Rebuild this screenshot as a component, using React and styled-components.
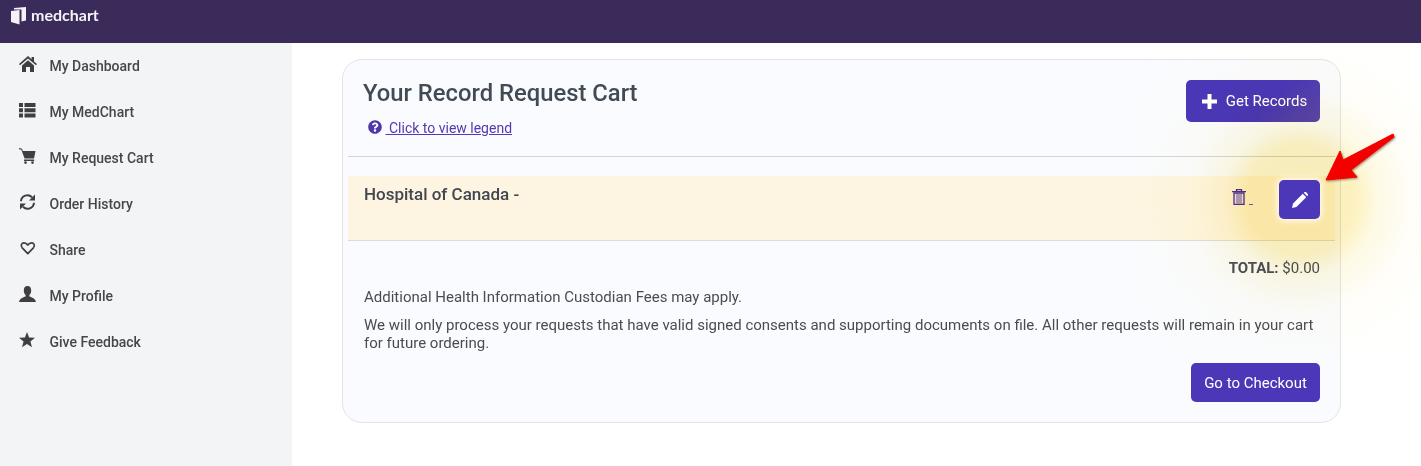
import React from 'react';
import styled, { createGlobalStyle } from 'styled-components';
import { FaQuestionCircle } from 'react-icons/fa';

const Global = createGlobalStyle`
  html, body { margin: 0; padding: 0; background: #fff; }
  body { font-family: Roboto, "Liberation Sans", sans-serif; color: #4a4a4f; }
  * { box-sizing: border-box; }
`;
const Page = styled.div`position: relative; width: 1421px; height: 466px; overflow: hidden;`;
const Header = styled.header`height: 43px; background: #3b2b5b; display: flex; align-items: flex-start; padding: 7px 0 0 11px; gap: 5px;`;
const LogoMark = styled.svg`flex: none;`;
const Logo = styled.span`font: 700 16px/16px Lato, Roboto, sans-serif; color: #f4f2f7;`;
const Body = styled.div`display: flex; height: 423px;`;
const Sidebar = styled.nav`width: 292px; background: #f3f4f6; flex: none;`;
const NavItem = styled.div`height: 46px; display: flex; align-items: center; padding-left: 19px; gap: 12.5px; color: #47474b; font-size: 14px; font-weight: 500;`;
const NavIcon = styled.svg`width: 18px; height: 16px; flex: none; fill: #3f3f43; margin-top: -4px; overflow: visible;`;
const Main = styled.main`flex: 1; padding: 16px 0 0 50px;`;
const Card = styled.section`width: 999px; height: 364px; background: #fafbfe; border: 1px solid #e4e4e6; border-radius: 20px; padding: 20px 5px 0;`;
const Top = styled.div`display: flex; justify-content: space-between; height: 77px; padding: 0 15px; border-bottom: 1px solid #d5d5d8;`;
const Title = styled.h1`margin: 0; font-size: 23.8px; line-height: 26px; font-weight: 500; color: #424a54;`;
const Legend = styled.a`display: flex; align-items: center; margin: 12px 0 0 5px; color: #5539b0; font-size: 14px; line-height: 20px; text-decoration: underline;`;
const LegendIcon = styled(FaQuestionCircle)`font-size: 14px; color: #4e35a8; margin-right: 3.5px; margin-top: -2px;`;
const Primary = styled.button`
  border: none; border-radius: 5px; color: #fff; font-family: inherit; font-size: 15px; font-weight: 400;
  background: ${p => p.$grad ? 'linear-gradient(135deg,#4a37b8 60%,#5b46ad)' : '#4c37b9'};
  display: inline-flex; align-items: center; justify-content: center; padding: 0;
`;
const GetRecords = styled(Primary)`width: 134px; height: 42px; gap: 9px; padding-left: 3px;`;
const Row = styled.div`height: 65px; margin-top: 19px; background: #fdf5e1; border-bottom: 1px solid #dcdcdc; display: flex; justify-content: space-between; padding: 4px 15px 0 16px;`;
const RowName = styled.div`font-size: 17px; line-height: 20px; font-weight: 500; color: #42464f; margin-top: 4px;`;
const RowActions = styled.div`display: flex; align-items: flex-start; gap: 26px;`;
const Trash = styled.span`display: flex; align-items: flex-end; gap: 3px; margin-top: 9px; width: 21px;`;
const Dash = styled.i`display: block; width: 4px; height: 1px; background: #6a5fb0; flex: none;`;
const Spacer = styled.div`width: 41px;`;
const EditBtn = styled(Primary)`width: 41px; height: 39px; box-shadow: 0 0 6px 2px rgba(255,255,255,.8);`;
const Footer = styled.div`padding: 17px 15px 0 16px;`;
const Total = styled.div`text-align: right; font-size: 15px; line-height: 20px; color: #4a4f59;`;
const Strong = styled.b`font-weight: 700;`;
const Para = styled.p`margin: ${p => p.$mt}px 0 0; font-size: 15px; line-height: 18px; color: #4c4c50;`;
const Actions = styled.div`display: flex; justify-content: flex-end; margin-top: 11px;`;
const Checkout = styled(Primary)`width: 129px; height: 39px;`;
const Glow = styled.div`
  position: absolute; left: 1140px; top: 40px; width: 320px; height: 320px; pointer-events: none;
  background: radial-gradient(circle, rgba(250,230,140,.62) 0%, rgba(250,230,140,.56) 24%, rgba(251,236,165,.3) 34%, rgba(253,245,205,.13) 50%, rgba(255,253,235,.05) 72%, rgba(255,255,255,0) 95%);
  mix-blend-mode: multiply;
`;
const EditLayer = styled.div`position: absolute; left: 1279px; top: 180px;`;
const Arrow = styled.svg`position: absolute; left: 1320px; top: 128px; overflow: visible; filter: drop-shadow(1px 1px 1px rgba(90,60,30,.6));`;

const Home = () => (
  <NavIcon viewBox="0 0 18 16"><path d="M9 0 L12.6 3.2 V1 H15 V5.4 L18 8 L17 9.2 L9 2.4 L1 9.2 L0 8 Z M3 9.4 L9 4.2 L15 9.4 V16 H11 V11 H7 V16 H3 Z" /></NavIcon>
);
const List = () => (
  <NavIcon viewBox="0 0 18 16"><path d="M0 1 H4 V5 H0 Z M5.5 1 H16.5 V5 H5.5 Z M0 6.3 H4 V10.3 H0 Z M5.5 6.3 H16.5 V10.3 H5.5 Z M0 11.6 H4 V15.6 H0 Z M5.5 11.6 H16.5 V15.6 H5.5 Z" /></NavIcon>
);
const Cart = () => (
  <NavIcon viewBox="0 0 18 16"><path d="M0 0 L3 .8 L3.8 3 H16.5 L15 10.6 H5.6 L2.3 1.8 L0 1.2 Z M5 11.6 H15.2 V12.9 H5 Z" /><circle cx="6.5" cy="14.6" r="1.3" /><circle cx="13.5" cy="14.6" r="1.3" /></NavIcon>
);
const Refresh = () => (
  <NavIcon viewBox="0 0 18 16">
    <path d="M2 7.2 A6.4 6.4 0 0 1 13 3.2" fill="none" stroke="#3f3f43" strokeWidth="2" />
    <path d="M16 .5 V6.5 H10 Z" />
    <path d="M15 8.8 A6.4 6.4 0 0 1 4 12.8" fill="none" stroke="#3f3f43" strokeWidth="2" />
    <path d="M1 15.5 V9.5 H7 Z" />
  </NavIcon>
);
const Heart = () => (
  <NavIcon viewBox="0 0 18 16"><path d="M8.8 13.6 L3.2 7.8 C1.2 5.6 2.6 2.8 5 2.8 C6.8 2.8 8 3.8 8.8 5 C9.6 3.8 10.8 2.8 12.6 2.8 C15 2.8 16.4 5.6 14.4 7.8 Z" fill="none" stroke="#3f3f43" strokeWidth="1.7" strokeLinejoin="round" /></NavIcon>
);
const User = () => (
  <NavIcon viewBox="0 0 18 16"><path d="M8.5 0 C5.8 0 4.8 2 4.8 4.4 C4.8 6.6 5.6 8 6.6 9 V10.6 C4 11.6 .9 12.4 0 16 H17 C16.1 12.4 13 11.6 10.4 10.6 V9 C11.4 8 12.2 6.6 12.2 4.4 C12.2 2 11.2 0 8.5 0 Z" /></NavIcon>
);
const Star = () => (
  <NavIcon viewBox="0 0 18 16"><path d="M8 0 L10.1 5.6 L16 5.8 L11.4 9.5 L13 15.2 L8 12 L3 15.2 L4.6 9.5 L0 5.8 L5.9 5.6 Z" /></NavIcon>
);

const nav = [
  [Home, 'My Dashboard'], [List, 'My MedChart'], [Cart, 'My Request Cart'],
  [Refresh, 'Order History'], [Heart, 'Share'], [User, 'My Profile'], [Star, 'Give Feedback'],
];

export default function App() {
  return (
    <Page>
      <Global />
      <Header>
        <LogoMark width="15" height="18" viewBox="0 0 15 18">
          <path d="M0 4 L8.5 3 V17.5 L0 15 Z" fill="#f4f2f7" />
          <path d="M3 1 L15 0 V13.5 L10.5 14.5 V2.4 L3 2.6 Z" fill="#f4f2f7" />
        </LogoMark>
        <Logo>medchart</Logo>
      </Header>
      <Body>
        <Sidebar>
          {nav.map(([I, t]) => (
            <NavItem key={t}><I />{t}</NavItem>
          ))}
        </Sidebar>
        <Main>
          <Card>
            <Top>
              <div>
                <Title>Your Record Request Cart</Title>
                <Legend><LegendIcon /><span>{'\u00a0Click to view legend'}</span></Legend>
              </div>
              <GetRecords $grad>
                <svg width="15" height="15" viewBox="0 0 15 15"><path d="M5.5 0 H9.5 V5.5 H15 V9.5 H9.5 V15 H5.5 V9.5 H0 V5.5 H5.5 Z" fill="#fff" /></svg>
                Get Records
              </GetRecords>
            </Top>
            <Row>
              <RowName>Hospital of Canada -</RowName>
              <RowActions>
                <Trash>
                  <svg width="14" height="16" viewBox="0 0 14 16">
                    <path d="M0 2.6 H14 M4.5 2.6 V.7 H9.5 V2.6" fill="none" stroke="#4a2fb0" strokeWidth="1.3" />
                    <path d="M2 4 H12 V15.4 H2 Z" fill="#f3e6f0" stroke="#4a2fb0" strokeWidth="1.3" />
                    <path d="M5 5 V14.5 M7 5 V14.5 M9 5 V14.5" stroke="#5a42c0" strokeWidth=".9" />
                  </svg>
                  <Dash />
                </Trash>
                <Spacer />
              </RowActions>
            </Row>
            <Footer>
              <Total><Strong>TOTAL:</Strong> $0.00</Total>
              <Para $mt={10}>Additional Health Information Custodian Fees may apply.</Para>
              <Para $mt={10}>We will only process your requests that have valid signed consents and supporting documents on file. All other requests will remain in your cart for future ordering.</Para>
              <Actions><Checkout>Go to Checkout</Checkout></Actions>
            </Footer>
          </Card>
        </Main>
      </Body>
      <Glow />
      <EditLayer>
        <EditBtn>
          <svg width="16" height="16" viewBox="0 0 16 16"><path d="M0 16 L1 11.6 L10.8 1.8 L14.2 5.2 L4.4 15 Z M11.8 .8 L12.6 0 C13 -.3 13.5 -.3 13.9 0 L15.9 2 C16.2 2.4 16.2 2.9 15.9 3.3 L15.2 4.2 Z" fill="#fff" /></svg>
        </EditBtn>
      </EditLayer>
      <Arrow width="80" height="60" viewBox="0 0 80 60">
        <path d="M73 6 L23 32 L20 23 L6 52 L37 49 L31 42 L74 9 Z" fill="#f50000" stroke="#f50000" strokeWidth="1" strokeLinejoin="round" />
      </Arrow>
    </Page>
  );
}
